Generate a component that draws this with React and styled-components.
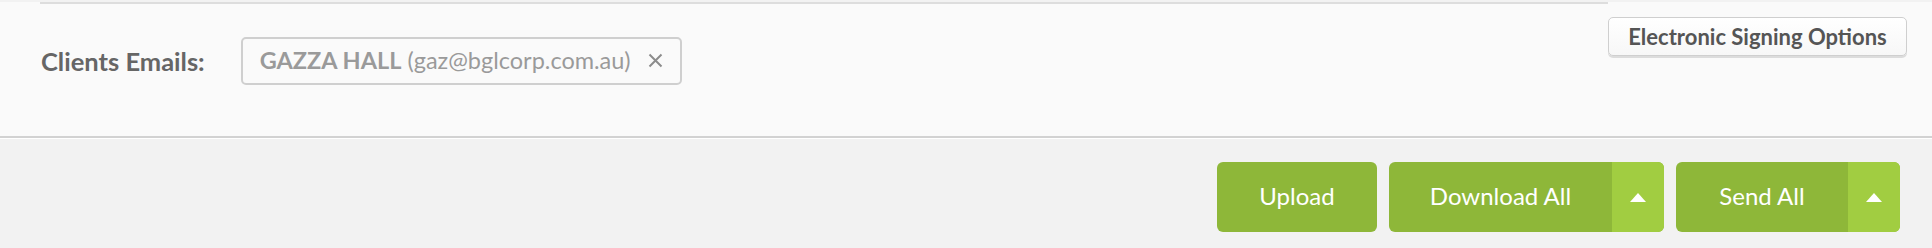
import React from 'react'
import styled, { createGlobalStyle } from 'styled-components'

const GlobalStyle = createGlobalStyle`
  body {
    margin: 0;
    background: #f2f2f2;
    font-family: Lato, "Open Sans", Arial, sans-serif;
  }
`;

const Panel = styled.div`
  box-sizing: border-box;
  height: 136px;
  background: #fafafa;
  border-bottom: 2px solid #d2d2d2;
`;

const TopRule = styled.div`
  height: 2px;
  margin: 2px 324px 0 40px;
  background: #dddddd;
`;

const Row = styled.div`
  display: flex;
  justify-content: space-between;
  align-items: flex-start;
  padding: 0 25px 0 41px;
`;

const Field = styled.div`
  display: flex;
  align-items: center;
  gap: 36px;
  margin-top: 33px;
`;

const Label = styled.span`
  font-size: 25.5px;
  font-weight: 700;
  color: #666;
`;

const Chip = styled.div`
  display: flex;
  align-items: center;
  box-sizing: border-box;
  width: 441px;
  height: 48px;
  padding: 0 17px 2px 17px;
  border: 2px solid #cfcfcf;
  border-radius: 5px;
  font-size: 23.5px;
  color: #9a9a9a;
  strong { font-weight: 700; margin-right: 6px; }
`;

const Remove = styled.span`
  margin-left: auto;
  display: flex;
`;

const OptionsButton = styled.button`
  margin-top: 13px;
  width: 299px;
  height: 39px;
  border: 1px solid #cfcfcf;
  border-radius: 5px;
  background: linear-gradient(#ffffff, #f7f7f7);
  box-shadow: 0 2px 0 #dcdcdc;
  font-family: inherit;
  font-size: 22px;
  font-weight: 700;
  color: #555;
`;

const Footer = styled.div`
  display: flex;
  justify-content: flex-end;
  gap: 12px;
  padding: 23px 32px 18px;
  border-top: 1px solid #ffffff;
`;

const Button = styled.button`
  display: flex;
  align-items: stretch;
  height: 70px;
  width: ${p => p.$w}px;
  padding: 0 0 3px;
  border: none;
  border-radius: 6px;
  overflow: hidden;
  background: #8eb739;
  color: #fff;
  font-family: inherit;
  font-size: 24px;
`;

const ButtonText = styled.span`
  flex: 1;
  display: flex;
  align-items: center;
  justify-content: center;
`;

const Caret = styled.span`
  width: 52px;
  margin-bottom: -3px;
  display: flex;
  align-items: center;
  justify-content: center;
  background: #a1cd41;
`;

const Triangle = () => (
  <svg width="16" height="9" viewBox="0 0 16 9">
    <path d="M8 0 L16 9 L0 9 Z" fill="#fff" />
  </svg>
);

const Cross = () => (
  <svg width="15" height="15" viewBox="0 0 15 15">
    <path d="M1.5 1.5 L13.5 13.5 M13.5 1.5 L1.5 13.5" stroke="#8c8c8c" strokeWidth="2" />
  </svg>
);

export default function App() {
  return (
    <>
      <GlobalStyle />
      <Panel>
        <TopRule />
        <Row>
          <Field>
            <Label>Clients Emails:</Label>
            <Chip>
              <strong>GAZZA HALL</strong>(gaz@bglcorp.com.au)
              <Remove><Cross /></Remove>
            </Chip>
          </Field>
          <OptionsButton>Electronic Signing Options</OptionsButton>
        </Row>
      </Panel>
      <Footer>
        <Button $w={160}><ButtonText>Upload</ButtonText></Button>
        <Button $w={275}><ButtonText>Download All</ButtonText><Caret><Triangle /></Caret></Button>
        <Button $w={224}><ButtonText>Send All</ButtonText><Caret><Triangle /></Caret></Button>
      </Footer>
    </>
  )
}
